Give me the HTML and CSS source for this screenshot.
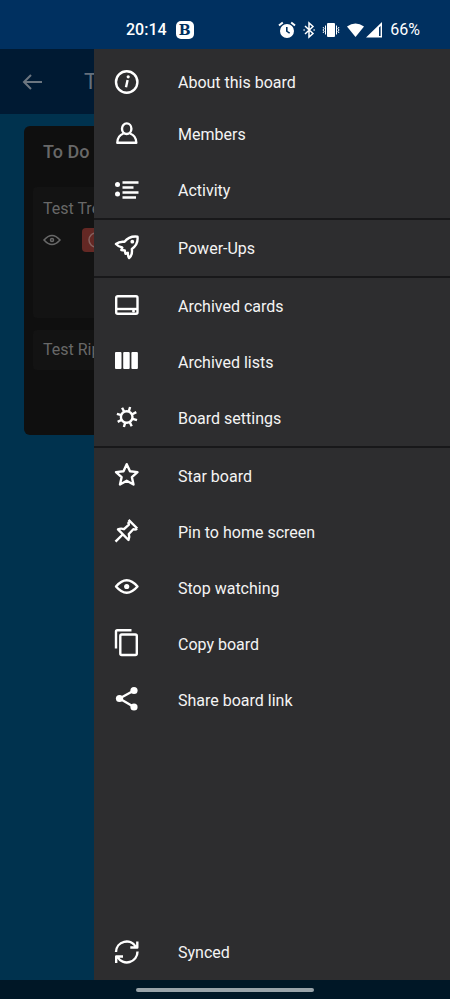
FILE: index.html
```
<!DOCTYPE html>
<html lang="en">
<head>
<meta charset="utf-8">
<meta name="viewport" content="width=device-width, initial-scale=1">
<title>Board menu</title>
<link rel="stylesheet" href="styles.css">
</head>
<body>
<header class="status">
  <div class="status-group">
    <span>20:14</span>
    <span class="app-badge">B</span>
  </div>
  <div class="status-group status-right">
    <svg class="solid" width="18" height="18" viewBox="0 0 18 18"><path fill-rule="evenodd" d="M9 3a7 7 0 1 1 0 14A7 7 0 0 1 9 3zM8 6v4.600l3.200 2.200.9-1.200-2.500-1.700V6z"/><path class="line" d="M1 4.500 4.800 1.400M17 4.500 13.200 1.400"/></svg>
    <svg class="line" width="14" height="18" viewBox="0 0 14 18"><path d="M3 5l8 7.500L7 16V2l4 3.500L3 13"/><path d="M1.500 9h1.200M11.500 9h1.200"/></svg>
    <svg class="solid" width="18" height="18" viewBox="0 0 18 18"><rect x="5" y="2" width="8" height="14" rx="1"/><path class="line thin" d="M3.500 4.500v9M14.500 4.500v9M1 6l1 1.500L1 9l1 1.500L1 12M17 6l-1 1.500L17 9l-1 1.500 1 1.500"/></svg>
    <svg class="solid signal" width="36" height="18" viewBox="0 0 36 18"><path d="M1 5.500Q9.500-.5 18 5.500L9.500 16z"/><path fill-rule="evenodd" d="M20 16.500 36 1v15.500zM33 6.500v8.500h1.600V5z"/></svg>
    <span class="battery">66%</span>
  </div>
</header>
<div class="screen">
  <main class="board">
    <div class="toolbar">
      <button class="back" type="button" aria-label="Back"><svg width="22" height="18" viewBox="0 0 22 18"><path d="M20 9H2M9 2 2 9l7 7"/></svg></button>
      <h1>T</h1>
    </div>
    <section class="list">
      <h2>To Do</h2>
      <article class="card card-tall">
        <p>Test Tre</p>
        <div class="badges">
          <svg width="18" height="12" viewBox="0 0 18 12"><path d="M1 6Q9-3 17 6 9 15 1 6z"/><circle cx="9" cy="6" r="1.500"/></svg>
          <span class="due"><svg width="16" height="16" viewBox="0 0 16 16"><circle cx="8" cy="8" r="7"/><path d="M8 4v4l3 2"/></svg></span>
        </div>
      </article>
      <article class="card"><p>Test Rip</p></article>
    </section>
  </main>
  <nav class="drawer" aria-label="Board menu">
    <ul class="group first">
      <li><button type="button"><svg viewBox="0 0 26 26"><circle cx="12.700" cy="13" r="10.700"/><path d="M13.600 11 12 18.300"/><circle class="dot" cx="14.200" cy="7.800" r="1.600"/></svg>About this board</button></li>
      <li><button type="button"><svg viewBox="0 0 26 26"><ellipse cx="12.700" cy="7.700" rx="4.700" ry="5.300"/><path d="M9.500 12.500C5.500 14 3.300 17 3.300 21.800h19c0-4.800-2.200-7.800-6.200-9.300"/></svg>Members</button></li>
      <li><button type="button"><svg viewBox="0 0 26 26"><circle class="dot" cx="3.500" cy="7.500" r="2.500"/><circle class="dot" cx="3.500" cy="17" r="2.500"/><path d="M8.500 5.500h16M8.500 10.500h11M8.500 15.500h16M8.500 20.500h13.500"/></svg>Activity</button></li>
    </ul>
    <ul class="group">
      <li><button type="button"><svg viewBox="0 0 26 26"><path d="M10.500 6.800C13.500 2.800 18 1 23.500 1.600c.6 4.900-1.200 9.400-5.700 12.400.6 3.800.2 6.600-2.700 9-1-1.600-1.300-3-1.300-5.200l-2.300 1-.7-3.300-3.500-.5 1-2.500c-2.500-.6-4.600-1.500-6.300-3.500 2.300-1.900 5.300-2.600 8.500-2.200z"/><circle class="dot" cx="18.300" cy="6.700" r="1.900"/></svg>Power-Ups</button></li>
    </ul>
    <ul class="group">
      <li><button type="button"><svg viewBox="0 0 26 26"><rect x="2.200" y="3.200" width="21.300" height="17.500" rx="1.500"/><path d="M2.500 16h21"/><circle class="dot" cx="19.500" cy="18" r="1.500"/></svg>Archived cards</button></li>
      <li><button type="button"><svg viewBox="0 0 26 26"><g class="bars"><rect x="1" y="3" width="6.500" height="17" rx="1"/><rect x="9.200" y="3" width="6.500" height="17" rx="1"/><rect x="17.400" y="3" width="6.500" height="17" rx="1"/></g></svg>Archived lists</button></li>
      <li><button type="button"><svg viewBox="0 0 26 26"><circle cx="12.700" cy="12" r="5.800"/><path d="M18.700 13.800 23 15.100M15.800 17.300 17.700 21.300M11.200 17.700 9.900 22M7.700 14.800 3.700 16.900M7.300 10.200 2.900 8.900M10.200 6.700 8.100 2.700M14.800 6.300 16.100 2M18.300 9.200 22.300 7.100"/></svg>Board settings</button></li>
    </ul>
    <ul class="group">
      <li><button type="button"><svg viewBox="0 0 26 26"><path d="M12.700 1.200 16 8.300l7.500.8-5.600 5.100 1.600 7.300-6.800-3.700-6.700 3.700 1.600-7.300L2 9.100l7.500-.8z"/></svg>Star board</button></li>
      <li><button type="button"><svg viewBox="0 0 26 26"><path d="M14.600.8 23.300 9.500M15.500 1.700c-1 1.200-1.300 2.500-.6 4L10 10.200c-2-.8-4-.8-6 .2L14.500 21c1-2.200 1-4 .3-6l4.500-4.800c1.500.6 2.700.4 3.700-.6M8.700 15.500 1.500 22.700"/></svg>Pin to home screen</button></li>
      <li><button type="button"><svg viewBox="0 0 26 26"><path d="M2 11.500Q12.700-1 23.500 11.500 12.700 24 2 11.500z"/><circle class="dot" cx="12.700" cy="11.500" r="2.600"/></svg>Stop watching</button></li>
      <li><button type="button"><svg viewBox="0 0 26 26"><rect x="6.300" y="3.500" width="16.500" height="20.500" rx="1.500"/><path d="M2 17.500V.5Q2-.8 3.300-.8H17.500"/></svg>Copy board</button></li>
      <li><button type="button"><svg viewBox="0 0 26 26"><path d="M20 3.500 5.500 11.500 20 20"/><circle class="dot" cx="20" cy="3.500" r="3.600"/><circle class="dot" cx="5.500" cy="11.500" r="3.600"/><circle class="dot" cx="20" cy="20" r="3.600"/></svg>Share board link</button></li>
    </ul>
    <div class="sync"><svg viewBox="0 0 26 26"><path d="M2 13A10.700 10.700 0 0 1 22 8M23.300 2.500V8.500h-7M23.500 12.500A10.700 10.700 0 0 1 3.500 18M2.200 24V17.500H9"/></svg><span>Synced</span></div>
  </nav>
</div>
<footer class="navbar"><span class="handle"></span></footer>
</body>
</html>
```
FILE: styles.css
```
* { box-sizing: border-box; }

body {
  margin: 0;
  min-height: 100vh;
  display: flex;
  flex-direction: column;
  font-family: Roboto, "Liberation Sans", sans-serif;
  font-size: 16px;
  background: #00324e;
  color: #fff;
}

h1, h2, p, ul { margin: 0; padding: 0; }
ul { list-style: none; }
svg { flex: none; display: block; overflow: visible; }

.status {
  height: 49px;
  padding: 20px 30px 0 126px;
  display: flex;
  align-items: flex-start;
  justify-content: space-between;
  background: #003060;
  font-weight: 500;
  line-height: 20px;
}
.status-group { display: flex; align-items: center; gap: 9px; }
.status-right { gap: 6px; }
.app-badge {
  width: 18px;
  height: 18px;
  border-radius: 5px;
  background: #fff;
  color: #003060;
  font-family: "DejaVu Serif", serif;
  font-size: 14px;
  font-weight: 700;
  line-height: 18px;
  text-align: center;
}
.solid { fill: #fff; }
.line { fill: none; stroke: #fff; stroke-width: 2; }
.line.thin { stroke-width: 1; }
svg.line { stroke-width: 1.5; }
.battery { font-weight: 400; margin-left: 2px; }

.screen { flex: 1; display: flex; }

.board {
  width: 94px;
  flex: none;
  overflow: hidden;
  white-space: nowrap;
  color: #686868;
}
.toolbar {
  height: 65px;
  padding-left: 22px;
  display: flex;
  align-items: center;
  gap: 40px;
  background: #001a33;
}
.toolbar h1 { font-size: 22px; font-weight: 400; color: #65707c; }
.back { padding: 0; border: 0; background: none; }
.back svg { fill: none; stroke: #6c7680; stroke-width: 2; }

.list {
  width: 280px;
  height: 309px;
  margin: 12px 0 0 24px;
  padding: 16px 9px;
  border-radius: 6px;
  background: #0f0f0f;
}
.list h2 {
  padding-left: 10px;
  margin-bottom: 25px;
  font-size: 18px;
  line-height: 20px;
  font-weight: 500;
}
.card {
  height: 40px;
  padding: 10px;
  margin-bottom: 12px;
  border-radius: 4px;
  background: #131313;
  line-height: 20px;
}
.card-tall { height: 131px; padding-top: 12px; }
.badges { display: flex; align-items: center; gap: 21px; margin-top: 9px; }
.badges svg { fill: none; stroke: #686868; stroke-width: 1.5; }
.due {
  width: 80px;
  height: 24px;
  padding: 4px 6px;
  border-radius: 4px;
  background: #642824;
}
.due svg { stroke: #85625f; }

.drawer {
  flex: 1;
  display: flex;
  flex-direction: column;
  background: #2d2d2f;
}
.first { padding-top: 9px; }
.group + .group { border-top: 2px solid #18181a; }
.group button, .sync {
  width: 100%;
  height: 56px;
  padding: 0 20px;
  border: 0;
  display: flex;
  align-items: center;
  gap: 38px;
  background: none;
  color: #f4f4f4;
  font: inherit;
  text-align: left;
}
.first li:first-child button { height: 48px; }
.drawer svg {
  width: 26px;
  height: 26px;
  fill: none;
  stroke: #fff;
  stroke-width: 2.4;
  stroke-linejoin: round;
}
.drawer .dot, .drawer .bars { fill: #fff; stroke: none; }
.sync { margin-top: auto; }

.navbar {
  height: 19px;
  display: flex;
  align-items: center;
  justify-content: center;
  background: #001726;
}
.handle { width: 178px; height: 4px; border-radius: 2px; background: #99a3a9; }
```
